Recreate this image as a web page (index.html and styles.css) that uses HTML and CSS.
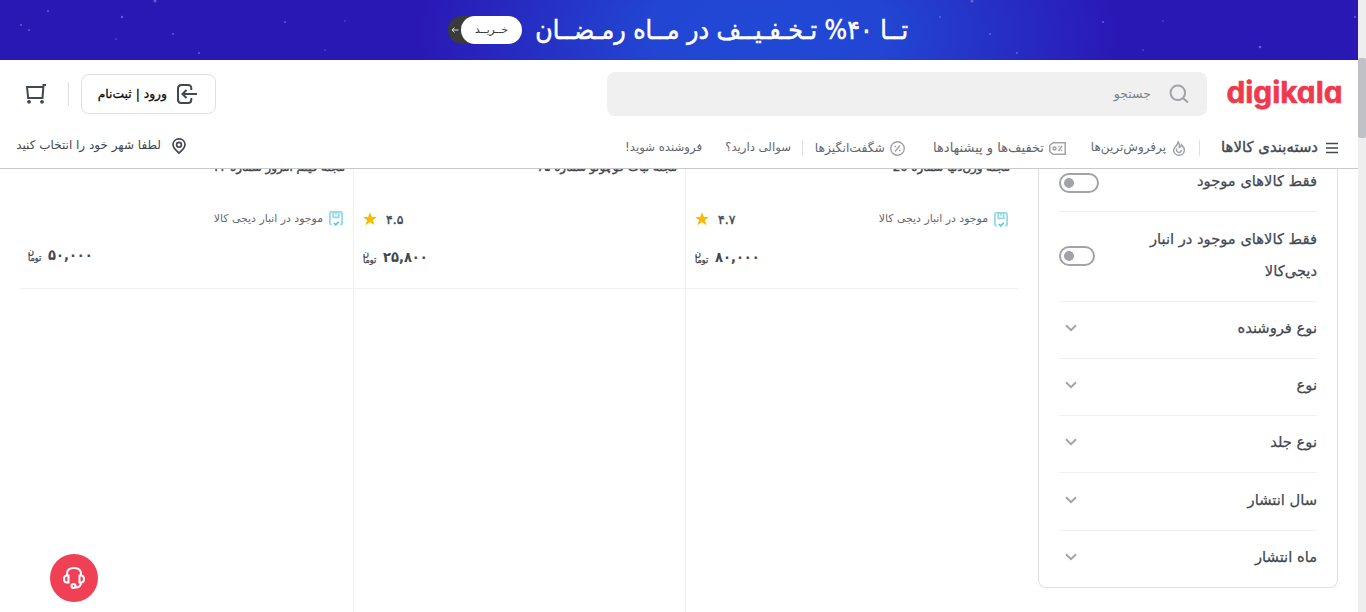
FILE: index.html
```
<!DOCTYPE html>
<html lang="fa">
<head>
<meta charset="utf-8">
<title>digikala</title>
<link rel="stylesheet" href="styles.css">
</head>
<body>
<svg width="0" height="0" class="defs">
  <symbol id="chevron" viewBox="0 0 12 8"><path d="M1 1.3 6 6.2 11 1.3" fill="none" stroke="#a1a3a8" stroke-width="1.9"/></symbol>
  <symbol id="star" viewBox="0 0 14 14"><path d="M7 .3 8.900 5h5L9.900 8.200l1.500 5L7 10.300l-4.400 2.900 1.500-5L.1 5h5z" fill="#f9bc00"/></symbol>
  <symbol id="stock" viewBox="0 0 14 15"><g fill="none" stroke="#8fd9e8" stroke-width="1.700"><path d="M2.800 13.600C1.400 13.600.9 13 .9 11.900V2.400C.9 1.300 1.300.9 2.400.9h9.200c1.100 0 1.500.4 1.500 1.500v9.500c0 1.100-.5 1.700-1.900 1.700M4.300 1v5.300h5.400V1M7 1v2.800"/><path d="m4.800 12 1.900 1.900 3-3.100" stroke="#5cc9df"/></g></symbol>
</svg>
<div class="page">
  <header class="header">
    <div class="banner">
      <svg class="sparks" width="1358" height="60" fill="#8f86ee"><circle cx="48" cy="11" r="1"/><circle cx="122" cy="17" r="1.200"/><circle cx="155" cy="1" r="1.500"/><circle cx="21" cy="25" r="1"/><circle cx="29" cy="30" r="1"/><circle cx="173" cy="34" r="1"/><circle cx="116" cy="39" r=".8"/><circle cx="285" cy="22" r="1"/><circle cx="345" cy="21" r=".8"/><circle cx="199" cy="53" r="1"/><circle cx="325" cy="50" r=".8"/><circle cx="940" cy="17" r="1"/><circle cx="972" cy="1" r="1.500"/><circle cx="990" cy="34" r="1"/><circle cx="1017" cy="53" r="1"/><circle cx="1103" cy="22" r="1"/><circle cx="1163" cy="21" r=".8"/><circle cx="1143" cy="50" r=".8"/><circle cx="1260" cy="47" r="1.300"/><circle cx="1355" cy="17" r="1"/></svg>
      <div class="banner-title">تــا ۴۰% تـخـفـیــف در مــاه رمـضــان</div>
      <div class="buy"><span class="buy-label">خــریــد</span><svg width="8" height="8" viewBox="0 0 8 8"><path d="M7.500 4H1M3.500 1.500 1 4l2.500 2.500" fill="none" stroke="#ddd"/></svg></div>
    </div>
    <div class="top">
      <svg class="logo" width="118" height="36" viewBox="0 0 118 36"><text class="logo-text" x="1.500" y="27" textLength="116" lengthAdjust="spacingAndGlyphs">digikala</text></svg>
      <div class="search">
        <svg width="20" height="20" viewBox="0 0 20 20" fill="none" stroke="#a1a3a8" stroke-width="2"><circle cx="8.800" cy="8.800" r="7.300"/><path d="m14 14 5 4.500"/></svg>
        <span class="placeholder">جستجو</span>
      </div>
      <div class="account">
        <div class="login">
          <svg width="20" height="20" viewBox="0 0 20 20" fill="none" stroke="#424750" stroke-width="2"><path d="M14.300 6V4.500C14.300 2.200 13.300 1 11 1H4.300C2 1 1 2.200 1 4.500v11C1 17.800 2 19 4.300 19H11c2.300 0 3.300-1.200 3.300-3.500V14M20 10H6M9.500 6 5.500 10l4 4"/></svg>
          <span class="login-text">ورود | ثبت‌نام</span>
        </div>
        <i class="bar bar-tall"></i>
        <svg class="cart" width="20" height="20" viewBox="0 0 20 20"><path d="M20 1h-2.500L16.500 14H2.200L1 3h16" fill="none" stroke="#424750" stroke-width="2"/><circle cx="3" cy="17.800" r="1.900" fill="#424750"/><circle cx="16" cy="17.800" r="1.900" fill="#424750"/></svg>
      </div>
    </div>
    <nav class="nav">
      <div class="nav-item cats"><svg width="12" height="12" viewBox="0 0 12 12"><path d="M0 1.500h12M0 6h12M0 10.500h12" stroke="#424750" stroke-width="1.700"/></svg><span>دسته‌بندی کالاها</span></div>
      <i class="bar"></i>
      <div class="nav-item best"><svg width="12" height="15" viewBox="0 0 12 15" fill="none" stroke="#a1a3a8" stroke-width="1.500"><path d="M5.200.8C6.500 2.800 6.700 4.500 6.300 6.500 7.800 6 8.500 5 8.500 3.800c2 1.600 2.800 3.500 2.800 5.400 0 2.900-2.300 5-5.300 5S.7 12.100.7 9.200C.7 6 5 4.500 5.200.8z"/><path d="M3.700 7.500c-.6 2.500.5 3.900 2.300 3.900 1.500 0 2.500-.9 2.500-2.300"/></svg><span>پرفروش‌ترین‌ها</span></div>
      <div class="nav-item offers"><svg width="17" height="13" viewBox="0 0 17 13" fill="none" stroke="#a1a3a8" stroke-width="1.500"><path d="M16.200.8v11.400H4L.8 9.500v-6L4 .8zM13 3.800l-3.500 5.400M9.300 4.500h1.400M11.800 8.500h1.400"/><circle cx="5.500" cy="6.500" r="1.500"/></svg><span>تخفیف‌ها و پیشنهادها</span></div>
      <div class="nav-item amazing"><svg width="15" height="15" viewBox="0 0 15 15" fill="none" stroke="#a1a3a8" stroke-width="1.400"><circle cx="7.500" cy="7.500" r="6.800"/><path d="m10 4.500-5 6M4.500 5.500H6M9 9.500h1.500"/></svg><span>شگفت‌انگیزها</span></div>
      <i class="bar"></i>
      <div class="nav-item faq"><span>سوالی دارید؟</span></div>
      <div class="nav-item seller"><span>فروشنده شوید!</span></div>
      <div class="nav-item city"><svg width="14" height="16" viewBox="0 0 14 16" fill="none" stroke="#424750" stroke-width="1.700"><path d="M7 15C3.500 12 1 10 1 6.800 1 3.300 3.600.9 7 .9s6 2.400 6 5.900C13 10 10.500 12 7 15z"/><circle cx="7" cy="6.700" r="2.400"/></svg><span>لطفا شهر خود را انتخاب کنید</span></div>
    </nav>
  </header>
  <main class="main">
    <aside class="filters">
      <div class="filter first"><span>فقط کالاهای موجود</span><b class="toggle wide"></b></div>
      <div class="filter double"><span>فقط کالاهای موجود در انبار<br>دیجی‌کالا</span><b class="toggle"></b></div>
      <div class="filter"><span>نوع فروشنده</span><svg class="chev"><use href="#chevron"/></svg></div>
      <div class="filter"><span>نوع</span><svg class="chev"><use href="#chevron"/></svg></div>
      <div class="filter"><span>نوع جلد</span><svg class="chev"><use href="#chevron"/></svg></div>
      <div class="filter year"><span>سال انتشار</span><svg class="chev"><use href="#chevron"/></svg></div>
      <div class="filter last"><span>ماه انتشار</span><svg class="chev"><use href="#chevron"/></svg></div>
    </aside>
    <section class="products">
      <article class="card">
        <h3 class="title">مجله وزن‌دنیا شماره 20</h3>
        <div class="info"><div class="stock"><svg width="14" height="15"><use href="#stock"/></svg><span>موجود در انبار دیجی کالا</span></div><div class="rate"><span>۴.۷</span><svg width="14" height="14"><use href="#star"/></svg></div></div>
        <div class="price"><span>۸۰,۰۰۰</span><span class="toman"><i class="noon">ن</i><i>توما</i></span></div>
      </article>
      <article class="card">
        <h3 class="title">مجله نبات کوچولو شماره ۶۵</h3>
        <div class="info"><div class="rate"><span>۴.۵</span><svg width="14" height="14"><use href="#star"/></svg></div></div>
        <div class="price"><span>۲۵,۸۰۰</span><span class="toman"><i class="noon">ن</i><i>توما</i></span></div>
      </article>
      <article class="card third">
        <h3 class="title">مجله فیلم امروز شماره ۲۲</h3>
        <div class="info"><div class="stock"><svg width="14" height="15"><use href="#stock"/></svg><span>موجود در انبار دیجی کالا</span></div></div>
        <div class="price"><span>۵۰,۰۰۰</span><span class="toman"><i class="noon">ن</i><i>توما</i></span></div>
      </article>
      <div class="card empty"></div>
      <div class="card empty"></div>
      <div class="card empty"></div>
    </section>
  </main>
  <button class="support" aria-label="support"><svg width="24" height="24" viewBox="0 0 24 24" fill="none" stroke="#fff" stroke-width="2"><path d="M5 9.500V8c0-4 2.500-6 7-6s7 2 7 6v1.500M6.500 9.500v7H5c-2 0-3-1-3-3.500s1-3.500 3-3.500zM17.500 9.500v7H19c2 0 3-1 3-3.500s-1-3.500-3-3.500zM19 16.500c0 3.500-1.500 5-5.500 5"/><circle cx="11.500" cy="20" r="2"/></svg></button>
</div>
<div class="scroll"><div class="thumb"></div></div>
</body>
</html>
```
FILE: styles.css
```
* { box-sizing: border-box; }
body {
  margin: 0;
  display: flex;
  height: 612px;
  overflow: hidden;
  background: #fff;
  color: #424750;
  font-family: "DejaVu Sans", sans-serif;
}
svg { display: block; flex: none; }
.defs { position: absolute; }
.page { position: relative; width: 1358px; height: 612px; overflow: hidden; direction: rtl; }
.scroll { width: 8px; background: #eee; padding-top: 58px; }
.thumb { height: 80px; background: #c0c1c6; border-radius: 2px; }

.header { height: 169px; background: #fff; border-bottom: 1px solid #c9c9c9; }
.banner {
  position: relative;
  height: 60px;
  padding-right: 450px;
  display: flex;
  align-items: center;
  background: radial-gradient(ellipse 350px 170px at 768px 32px, #2049d6 0%, #2245d2 35%, #2a18b5 100%);
}
.sparks { position: absolute; left: 0; top: 0; opacity: .6; }
.banner-title {
  width: 374px;
  color: #fff;
  font-family: "DejaVu Sans Condensed", "DejaVu Sans", sans-serif;
  font-stretch: condensed;
  font-size: 26.4px;
  line-height: 60px;
  white-space: nowrap;
  -webkit-text-stroke: .5px #fff;
}
.buy {
  margin-right: 12px;
  width: 74px;
  height: 28px;
  border-radius: 14px;
  background: #3a3a3a;
  display: flex;
  align-items: center;
  gap: 2px;
}
.buy-label { width: 61px; height: 28px; border-radius: 14px; background: #fff; color: #333; font-size: 10.5px; line-height: 27px; text-align: center; }

.top { height: 68px; display: flex; align-items: center; padding: 0 15px 0 26px; }
.logo { overflow: visible; }
.logo-text { font-family: Inter, Roboto, sans-serif; font-weight: 700; font-size: 30px; font-feature-settings: "cv11"; fill: #ef394e; stroke: #ef394e; stroke-width: .6px; direction: ltr; }
.search {
  margin-right: 18px;
  width: 600px;
  height: 44px;
  border-radius: 8px;
  background: #f0f0f1;
  display: flex;
  align-items: center;
  gap: 18px;
  padding-right: 18px;
}
.placeholder { font-size: 12.5px; color: #81858b; padding-bottom: 2px; }
.account { margin-right: auto; display: flex; align-items: center; }
.login {
  width: 135px;
  height: 40px;
  border: 1px solid #e0e0e2;
  border-radius: 8px;
  display: flex;
  align-items: center;
  gap: 10px;
  padding-right: 18px;
}
.login-text { font-size: 12.3px; color: #0c0c0c; white-space: nowrap; -webkit-text-stroke: .3px #0c0c0c; }
.bar { width: 1px; height: 16px; background: #e0e0e2; }
.bar-tall { height: 24px; margin: 0 12px 0 22px; }

.nav { height: 40px; display: flex; align-items: center; padding: 0 20px 0 16px; font-size: 12px; color: #62666d; }
.nav-item { display: flex; align-items: center; gap: 7px; white-space: nowrap; }
.nav-item span { padding-bottom: 2px; }
.cats { width: 118px; gap: 8px; color: #424750; font-size: 14.9px; margin-left: 20px; -webkit-text-stroke: .4px #424750; }
.best { width: 94px; margin: 0 14px 0 25px; }
.offers { width: 135px; gap: 5px; margin-left: 26px; font-size: 13px; }
.amazing { width: 91px; gap: 5px; margin-left: 11px; font-size: 12.4px; }
.faq { width: 65px; margin: 0 11px 0 24px; font-size: 11.7px; }
.seller { width: 77px; font-size: 11.7px; }
.city { width: 170px; gap: 11px; margin-right: auto; margin-bottom: 4px; color: #424750; }

.main { height: 443px; overflow: hidden; display: flex; gap: 20px; padding: 0 20px; }
.filters { width: 300px; height: 419px; padding: 0 20px; border: 1px solid #e0e0e2; border-top: 0; border-radius: 0 0 8px 8px; }
.filter {
  height: 57px;
  border-bottom: 1px solid #f0f0f1;
  display: flex;
  justify-content: space-between;
  align-items: center;
  font-size: 14.7px;
  line-height: 32px;
  padding-bottom: 4px;
  white-space: nowrap;
  -webkit-text-stroke: .25px #424750;
}
.first { height: 43px; padding-bottom: 15px; }
.first span { padding-bottom: 3px; }
.double { height: 90px; padding-bottom: 1px; }
.double span { padding-bottom: 2px; }
.year { height: 58px; }
.last { height: 56px; border: 0; }
.chev { width: 12px; height: 8px; margin-left: 6px; }
.toggle { width: 36px; height: 20px; border: 2px solid #a1a3a8; border-radius: 10px; padding: 3px; direction: ltr; }
.toggle::before { content: ""; display: block; width: 10px; height: 10px; border-radius: 50%; background: #a1a3a8; }
.wide { width: 40px; }

.products { width: 998px; display: grid; grid-template-columns: 333px 332px 333px; grid-template-rows: 120px 324px; }
.card { border-left: 1px solid #f0f0f1; border-bottom: 1px solid #f0f0f1; padding: 0 8px; }
.card:nth-child(3n) { border-left: 0; }
.empty { border-bottom: 0; }
.title { margin: -14px 0 0; height: 24px; line-height: 24px; font-size: 11.7px; font-weight: 400; white-space: nowrap; -webkit-text-stroke: .45px #424750; }
.info { height: 20px; margin-top: 30px; display: flex; align-items: center; padding: 0 2px 0 1px; }
.stock { display: flex; align-items: center; gap: 6px; font-size: 10.9px; color: #62666d; white-space: nowrap; }
.stock span { padding-bottom: 1px; }
.rate { margin-right: auto; display: flex; align-items: center; gap: 9px; font-size: 12.5px; -webkit-text-stroke: .4px #424750; }
.price {
  margin: 18px 0 0 1px;
  height: 20px;
  display: flex;
  align-items: center;
  justify-content: flex-end;
  gap: 5px;
  font-family: "DejaVu Sans Condensed", "DejaVu Sans", sans-serif;
  font-stretch: condensed;
  font-size: 14.5px;
  font-weight: 700;
}
.third .price { margin: 16px 0 0; }
.third .stock { margin-top: -1px; }
.toman { width: 15px; display: flex; flex-direction: column; align-items: flex-end; font-size: 9px; font-weight: 400; line-height: 8px; -webkit-text-stroke: .3px #424750; }
.toman i { font-style: normal; white-space: nowrap; }
.toman .noon { line-height: 5px; }

.support {
  position: absolute;
  left: 50px;
  top: 554px;
  width: 48px;
  height: 48px;
  padding: 12px;
  border: 0;
  border-radius: 50%;
  background: #ef4056;
}
```
